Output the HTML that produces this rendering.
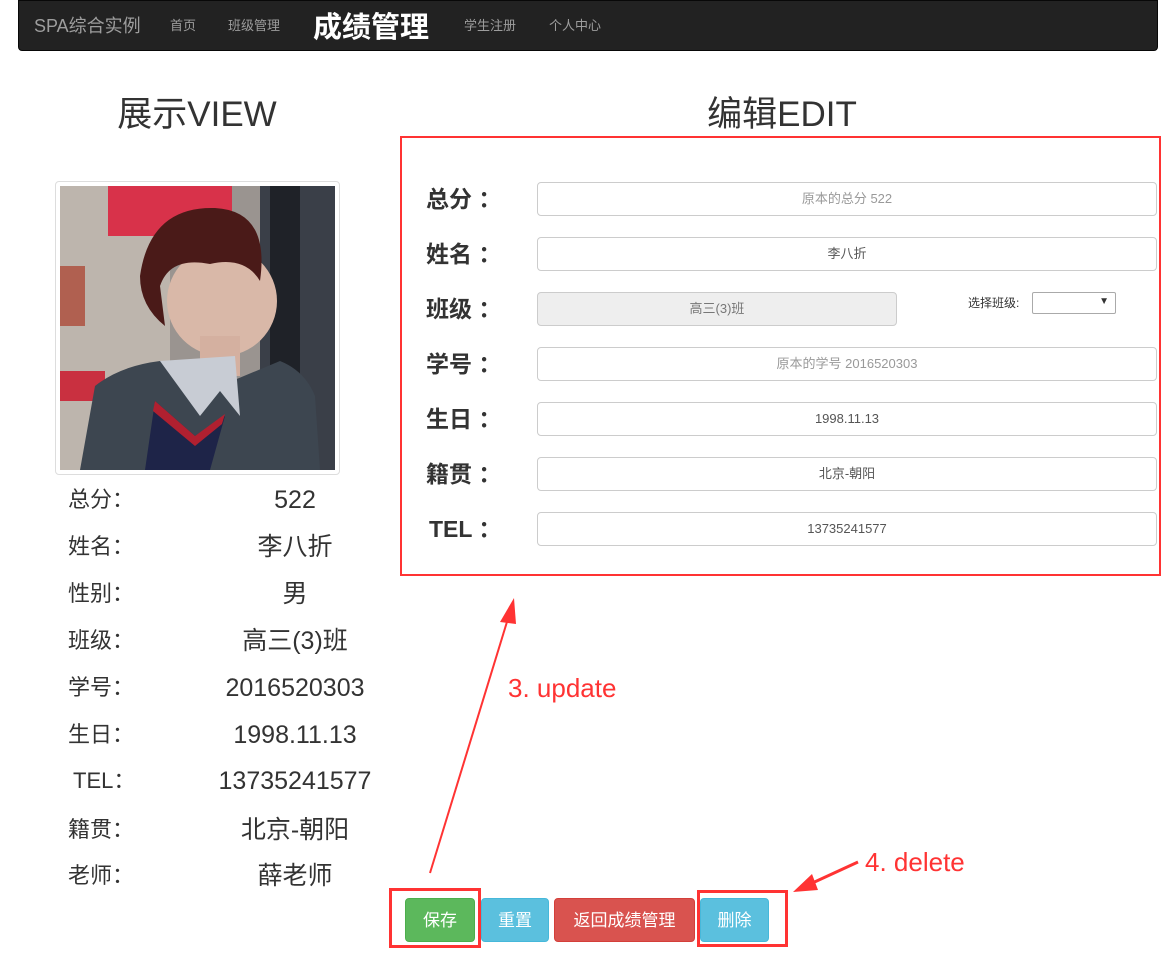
<!DOCTYPE html>
<html><head><meta charset="utf-8"><style>
*{box-sizing:border-box;margin:0;padding:0}
body{width:1169px;height:953px;background:#fff;font-family:"Liberation Sans","Noto Sans CJK SC",sans-serif;color:#333;position:relative;overflow:hidden}
.a{position:absolute;white-space:nowrap}
.nav{left:18px;top:0;width:1140px;height:51px;background:#222;border:1px solid #080808;border-radius:0 0 4px 4px}
.nl{color:#9d9d9d;font-size:13px;top:16px;line-height:20px}
.lbl{font-size:22px;left:68px;line-height:30px;height:30px}
.val{font-size:25px;width:200px;left:195px;text-align:center;line-height:30px;height:30px}
.fl{font-size:23px;font-weight:bold;left:426px;line-height:30px;height:30px}
.in{left:537px;width:620px;height:34px;border:1px solid #ccc;border-radius:4px;font-size:13px;text-align:center;line-height:32px;color:#555}
.btn{top:898px;height:44px;border-radius:4px;color:#fff;font-size:17px;text-align:center;line-height:44px}
.red{color:#f33;font-size:26px;line-height:32px}
</style></head><body>
<div class="a nav"></div>
<div class="a" style="left:34px;top:13px;font-size:18px;color:#9d9d9d;line-height:26px">SPA综合实例</div>
<div class="a nl" style="left:170px">首页</div>
<div class="a nl" style="left:228px">班级管理</div>
<div class="a" style="left:313px;top:10px;font-size:29px;font-weight:bold;color:#fff;line-height:36px">成绩管理</div>
<div class="a nl" style="left:464px">学生注册</div>
<div class="a nl" style="left:549px">个人中心</div>

<div class="a" style="left:97px;top:94px;width:200px;text-align:center;font-size:35px;line-height:42px">展示VIEW</div>
<div class="a" style="left:682px;top:94px;width:200px;text-align:center;font-size:35px;line-height:42px">编辑EDIT</div>

<div class="a" style="left:55px;top:181px;width:285px;height:294px;border:1px solid #ddd;border-radius:4px"></div>
<svg class="a" style="left:60px;top:186px" width="275" height="284" viewBox="0 0 275 284">
<rect width="275" height="284" fill="#9a9490"/>
<rect x="0" y="0" width="110" height="284" fill="#bdb5ad"/>
<rect x="200" y="0" width="75" height="284" fill="#3a3f48"/>
<rect x="210" y="0" width="30" height="284" fill="#1f2228"/>
<rect x="48" y="0" width="124" height="50" fill="#d8324a"/>
<rect x="0" y="185" width="45" height="30" fill="#c93040"/>
<rect x="0" y="80" width="25" height="60" fill="#b06050"/>
<ellipse cx="162" cy="115" rx="55" ry="55" fill="#d9b8a8"/>
<path d="M80 90 Q90 20 155 22 Q210 25 200 95 Q185 70 150 78 Q110 70 100 100 L105 140 Q80 120 80 90Z" fill="#4a1a18"/>
<rect x="140" y="150" width="40" height="40" fill="#d4b0a0"/>
<path d="M20 284 L35 200 Q60 180 100 175 L160 200 L220 175 Q245 185 255 210 L260 284Z" fill="#3d4650"/>
<path d="M100 175 L140 230 L160 205 L180 230 L175 170 Z" fill="#c8ccd4"/>
<path d="M85 284 L95 215 L135 250 L165 230 L150 284Z" fill="#1e2448"/>
<path d="M95 215 L135 250 L165 228 L162 238 L135 260 L93 225Z" fill="#b02030"/>
</svg>

<div class="a lbl" style="top:485px">总分：</div><div class="a val" style="top:485px">522</div>
<div class="a lbl" style="top:532px">姓名：</div><div class="a val" style="top:532px">李八折</div>
<div class="a lbl" style="top:579px">性别：</div><div class="a val" style="top:579px">男</div>
<div class="a lbl" style="top:626px">班级：</div><div class="a val" style="top:626px">高三(3)班</div>
<div class="a lbl" style="top:673px">学号：</div><div class="a val" style="top:673px">2016520303</div>
<div class="a lbl" style="top:720px">生日：</div><div class="a val" style="top:720px">1998.11.13</div>
<div class="a lbl" style="top:766px;left:73px">TEL：</div><div class="a val" style="top:766px">13735241577</div>
<div class="a lbl" style="top:815px">籍贯：</div><div class="a val" style="top:815px">北京-朝阳</div>
<div class="a lbl" style="top:861px">老师：</div><div class="a val" style="top:861px">薛老师</div>

<div class="a" style="left:400px;top:136px;width:761px;height:440px;border:2px solid #f33"></div>
<div class="a fl" style="top:184px">总分 ：</div><div class="a in" style="top:182px;color:#999">原本的总分 522</div>
<div class="a fl" style="top:239px">姓名 ：</div><div class="a in" style="top:237px">李八折</div>
<div class="a fl" style="top:294px">班级 ：</div><div class="a in" style="top:292px;width:360px;background:#eee;color:#777">高三(3)班</div>
<div class="a" style="left:968px;top:294px;font-size:12px;line-height:18px">选择班级:</div>
<div class="a" style="left:1032px;top:292px;width:84px;height:22px;border:1px solid #aaa;border-radius:2px;font-size:10px;text-align:right;padding-right:6px;line-height:18px">▼</div>
<div class="a fl" style="top:349px">学号 ：</div><div class="a in" style="top:347px;color:#999">原本的学号 2016520303</div>
<div class="a fl" style="top:404px">生日 ：</div><div class="a in" style="top:402px">1998.11.13</div>
<div class="a fl" style="top:459px">籍贯 ：</div><div class="a in" style="top:457px">北京-朝阳</div>
<div class="a fl" style="top:514px;left:429px">TEL ：</div><div class="a in" style="top:512px">13735241577</div>

<svg class="a" style="left:0;top:0" width="1169" height="953">
<line x1="430" y1="873" x2="510" y2="612" stroke="#f33" stroke-width="2"/>
<polygon points="514,598 500,622 516,624" fill="#f33"/>
<line x1="858" y1="862" x2="808" y2="885" stroke="#f33" stroke-width="3"/>
<polygon points="793,892 812,874 818,890" fill="#f33"/>
</svg>
<div class="a red" style="left:508px;top:672px">3. update</div>
<div class="a red" style="left:865px;top:846px">4. delete</div>

<div class="a btn" style="left:405px;width:70px;background:#5cb85c;border:1px solid #4cae4c">保存</div>
<div class="a btn" style="left:481px;width:68px;background:#5bc0de;border:1px solid #46b8da">重置</div>
<div class="a btn" style="left:554px;width:141px;background:#d9534f;border:1px solid #d43f3a">返回成绩管理</div>
<div class="a btn" style="left:700px;width:69px;background:#5bc0de;border:1px solid #46b8da">删除</div>
<div class="a" style="left:389px;top:888px;width:92px;height:60px;border:3px solid #f33"></div>
<div class="a" style="left:697px;top:890px;width:91px;height:57px;border:3px solid #f33"></div>
</body></html>
